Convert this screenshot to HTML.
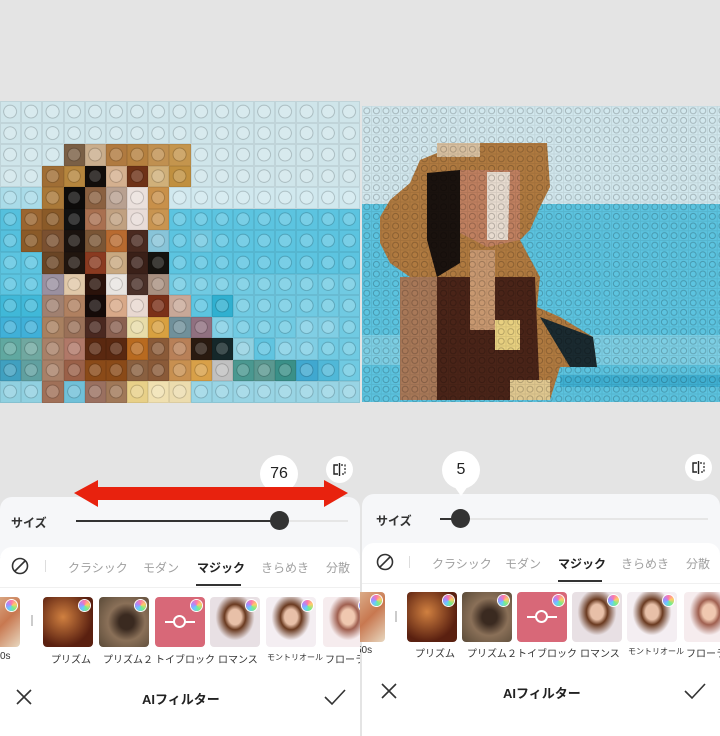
<!DOCTYPE html>
<html><head><meta charset="utf-8">
<style>
*{margin:0;padding:0;box-sizing:border-box}
body{width:720px;height:736px;overflow:hidden;background:#e4e4e4;font-family:"Liberation Sans","Noto Sans CJK JP",sans-serif;position:relative}
.abs{position:absolute}
.half{position:absolute;top:0;width:360px;height:736px;overflow:hidden}
.inner{position:absolute;top:0;width:720px;height:736px}
#lm{position:absolute;left:0;top:101px;width:360px;height:302px;display:grid;grid-template-columns:repeat(17,1fr);grid-template-rows:repeat(14,1fr)}
#lm div{box-shadow:inset 0 0 0 1px rgba(0,0,0,.07);background-image:radial-gradient(circle at 48% 48%,rgba(255,255,255,.18) 0 36%,rgba(0,0,0,.22) 40%,transparent 46%)}
.panel{background:#f6f7f9;border-radius:12px 12px 0 0}
.card{background:#fff;border-radius:12px 12px 0 0}
.lbl{font-size:12px;font-weight:bold;color:#333}
.tab{position:absolute;font-size:12px;color:#a0a0a0;white-space:nowrap}
.tab.on{color:#222;font-weight:bold}
.th{position:absolute;width:50px;height:50px;border-radius:4px;overflow:hidden}
.badge{position:absolute;right:3px;top:3px;width:11px;height:11px;border-radius:50%;background:conic-gradient(#f7a,#fc6,#7e8,#6cf,#a8f,#f7a);box-shadow:0 0 0 1px #fff}
.tl{position:absolute;font-size:10px;color:#333;white-space:nowrap}
.title{position:absolute;font-size:13px;font-weight:bold;color:#222}
.bub{position:absolute;width:38px;height:38px;border-radius:50%;background:#fff;font-size:16px;color:#222;text-align:center;line-height:38px}
.bub:after{content:"";position:absolute;left:12px;top:35px;border:7px solid transparent;border-top:10px solid #fff;border-bottom:0}
.cmp{position:absolute;width:27px;height:27px;border-radius:50%;background:#fff}
</style></head><body>

<div class="half" style="left:0"><div class="inner" style="left:0">
<div id="lm">
<div style="background-color:#cfe5ea"></div><div style="background-color:#cfe5ea"></div><div style="background-color:#cfe5ea"></div><div style="background-color:#cfe5ea"></div><div style="background-color:#cfe5ea"></div><div style="background-color:#cfe5ea"></div><div style="background-color:#cfe5ea"></div><div style="background-color:#cfe5ea"></div><div style="background-color:#cfe5ea"></div><div style="background-color:#cfe5ea"></div><div style="background-color:#cfe5ea"></div><div style="background-color:#cfe5ea"></div><div style="background-color:#cfe5ea"></div><div style="background-color:#cfe5ea"></div><div style="background-color:#cfe5ea"></div><div style="background-color:#cfe5ea"></div><div style="background-color:#cfe5ea"></div>
<div style="background-color:#cfe5ea"></div><div style="background-color:#cfe5ea"></div><div style="background-color:#cfe5ea"></div><div style="background-color:#cfe5ea"></div><div style="background-color:#cfe5ea"></div><div style="background-color:#cfe5ea"></div><div style="background-color:#cfe5ea"></div><div style="background-color:#cfe5ea"></div><div style="background-color:#cfe5ea"></div><div style="background-color:#cfe5ea"></div><div style="background-color:#cfe5ea"></div><div style="background-color:#cfe5ea"></div><div style="background-color:#cfe5ea"></div><div style="background-color:#cfe5ea"></div><div style="background-color:#cfe5ea"></div><div style="background-color:#cfe5ea"></div><div style="background-color:#cfe5ea"></div>
<div style="background-color:#cfe5ea"></div><div style="background-color:#cfe5ea"></div><div style="background-color:#cfe5ea"></div><div style="background-color:#7a5f45"></div><div style="background-color:#c9ad8c"></div><div style="background-color:#b07a40"></div><div style="background-color:#b5803f"></div><div style="background-color:#c09050"></div><div style="background-color:#c4954d"></div><div style="background-color:#cfe5ea"></div><div style="background-color:#cfe5ea"></div><div style="background-color:#cfe5ea"></div><div style="background-color:#cfe5ea"></div><div style="background-color:#cfe5ea"></div><div style="background-color:#cfe5ea"></div><div style="background-color:#cfe5ea"></div><div style="background-color:#cfe5ea"></div>
<div style="background-color:#cfe5ea"></div><div style="background-color:#cfe5ea"></div><div style="background-color:#a06e35"></div><div style="background-color:#b5853d"></div><div style="background-color:#120d0a"></div><div style="background-color:#d4b08f"></div><div style="background-color:#6e3217"></div><div style="background-color:#d0b07a"></div><div style="background-color:#c09040"></div><div style="background-color:#cfe5ea"></div><div style="background-color:#cfe5ea"></div><div style="background-color:#cfe5ea"></div><div style="background-color:#cfe5ea"></div><div style="background-color:#cfe5ea"></div><div style="background-color:#cfe5ea"></div><div style="background-color:#cfe5ea"></div><div style="background-color:#cfe5ea"></div>
<div style="background-color:#a9dbe8"></div><div style="background-color:#a9dbe8"></div><div style="background-color:#a97838"></div><div style="background-color:#0d0b0a"></div><div style="background-color:#8a6040"></div><div style="background-color:#b8a090"></div><div style="background-color:#eae0dc"></div><div style="background-color:#c8904a"></div><div style="background-color:#d0e8ee"></div><div style="background-color:#d0e8ee"></div><div style="background-color:#d0e8ee"></div><div style="background-color:#d0e8ee"></div><div style="background-color:#d0e8ee"></div><div style="background-color:#d0e8ee"></div><div style="background-color:#d0e8ee"></div><div style="background-color:#d0e8ee"></div><div style="background-color:#d0e8ee"></div>
<div style="background-color:#55c0dd"></div><div style="background-color:#9a6530"></div><div style="background-color:#8a5a28"></div><div style="background-color:#111"></div><div style="background-color:#a97050"></div><div style="background-color:#c0a080"></div><div style="background-color:#e8dcd8"></div><div style="background-color:#c89450"></div><div style="background-color:#5cc4e0"></div><div style="background-color:#5cc4e0"></div><div style="background-color:#5cc4e0"></div><div style="background-color:#5cc4e0"></div><div style="background-color:#5cc4e0"></div><div style="background-color:#5cc4e0"></div><div style="background-color:#5cc4e0"></div><div style="background-color:#5cc4e0"></div><div style="background-color:#5cc4e0"></div>
<div style="background-color:#55c0dd"></div><div style="background-color:#8a5a28"></div><div style="background-color:#7a5030"></div><div style="background-color:#1a120e"></div><div style="background-color:#7a5535"></div><div style="background-color:#b86a30"></div><div style="background-color:#4a2a20"></div><div style="background-color:#88c4d8"></div><div style="background-color:#5cc4e0"></div><div style="background-color:#70c8e0"></div><div style="background-color:#5cc4e0"></div><div style="background-color:#5cc4e0"></div><div style="background-color:#5cc4e0"></div><div style="background-color:#5cc4e0"></div><div style="background-color:#5cc4e0"></div><div style="background-color:#5cc4e0"></div><div style="background-color:#5cc4e0"></div>
<div style="background-color:#5cc4e0"></div><div style="background-color:#5cc4e0"></div><div style="background-color:#6a4525"></div><div style="background-color:#20150e"></div><div style="background-color:#8a3a20"></div><div style="background-color:#c8a880"></div><div style="background-color:#3a2018"></div><div style="background-color:#15120e"></div><div style="background-color:#5cc4e0"></div><div style="background-color:#5cc4e0"></div><div style="background-color:#5cc4e0"></div><div style="background-color:#5cc4e0"></div><div style="background-color:#5cc4e0"></div><div style="background-color:#5cc4e0"></div><div style="background-color:#5cc4e0"></div><div style="background-color:#5cc4e0"></div><div style="background-color:#5cc4e0"></div>
<div style="background-color:#5cc4e0"></div><div style="background-color:#5cc4e0"></div><div style="background-color:#9a90a0"></div><div style="background-color:#e0c8a8"></div><div style="background-color:#2a120a"></div><div style="background-color:#e8e4e0"></div><div style="background-color:#4a3028"></div><div style="background-color:#a89080"></div><div style="background-color:#70cae2"></div><div style="background-color:#70cae2"></div><div style="background-color:#70cae2"></div><div style="background-color:#70cae2"></div><div style="background-color:#70cae2"></div><div style="background-color:#70cae2"></div><div style="background-color:#70cae2"></div><div style="background-color:#70cae2"></div><div style="background-color:#70cae2"></div>
<div style="background-color:#40b8d8"></div><div style="background-color:#40b8d8"></div><div style="background-color:#a08070"></div><div style="background-color:#b08060"></div><div style="background-color:#150a08"></div><div style="background-color:#d8a888"></div><div style="background-color:#e8d8d0"></div><div style="background-color:#7a3018"></div><div style="background-color:#c8a898"></div><div style="background-color:#5cc4e0"></div><div style="background-color:#30b0d0"></div><div style="background-color:#70cae2"></div><div style="background-color:#70cae2"></div><div style="background-color:#70cae2"></div><div style="background-color:#70cae2"></div><div style="background-color:#70cae2"></div><div style="background-color:#70cae2"></div>
<div style="background-color:#40b0d8"></div><div style="background-color:#40b0d8"></div><div style="background-color:#a88060"></div><div style="background-color:#9a7058"></div><div style="background-color:#4a2820"></div><div style="background-color:#8a6050"></div><div style="background-color:#e8dca8"></div><div style="background-color:#d8a040"></div><div style="background-color:#70909a"></div><div style="background-color:#907080"></div><div style="background-color:#80cee4"></div><div style="background-color:#70cae2"></div><div style="background-color:#70cae2"></div><div style="background-color:#70cae2"></div><div style="background-color:#80cee4"></div><div style="background-color:#80cee4"></div><div style="background-color:#70cae2"></div>
<div style="background-color:#60a8a0"></div><div style="background-color:#70a8a0"></div><div style="background-color:#a88068"></div><div style="background-color:#b07868"></div><div style="background-color:#5a2810"></div><div style="background-color:#5a2810"></div><div style="background-color:#b86a20"></div><div style="background-color:#8a5a38"></div><div style="background-color:#b88058"></div><div style="background-color:#2a1a10"></div><div style="background-color:#15282a"></div><div style="background-color:#90d0e0"></div><div style="background-color:#60c4e0"></div><div style="background-color:#80cee4"></div><div style="background-color:#80cee4"></div><div style="background-color:#70cae2"></div><div style="background-color:#70cae2"></div>
<div style="background-color:#40a0c0"></div><div style="background-color:#60a0a0"></div><div style="background-color:#a88068"></div><div style="background-color:#9a6048"></div><div style="background-color:#8a4a18"></div><div style="background-color:#8a4a18"></div><div style="background-color:#8a6040"></div><div style="background-color:#8a5a38"></div><div style="background-color:#c89050"></div><div style="background-color:#d8a048"></div><div style="background-color:#c0c0c0"></div><div style="background-color:#4a9890"></div><div style="background-color:#5a9890"></div><div style="background-color:#3a9088"></div><div style="background-color:#40a8d0"></div><div style="background-color:#50b8d8"></div><div style="background-color:#70cae2"></div>
<div style="background-color:#90d0e0"></div><div style="background-color:#90d0e0"></div><div style="background-color:#a07058"></div><div style="background-color:#70c0d8"></div><div style="background-color:#9a7060"></div><div style="background-color:#a07858"></div><div style="background-color:#e8d088"></div><div style="background-color:#f0e0b0"></div><div style="background-color:#ecdcae"></div><div style="background-color:#98d4e4"></div><div style="background-color:#98d4e4"></div><div style="background-color:#98d4e4"></div><div style="background-color:#98d4e4"></div><div style="background-color:#98d4e4"></div><div style="background-color:#98d4e4"></div><div style="background-color:#98d4e4"></div><div style="background-color:#98d4e4"></div>
</div>

<div class="cmp" style="left:326px;top:456px"><svg width="27" height="27"><path d="M13.5 7v13M12 9h-4v9h4" stroke="#222" stroke-width="1.4" fill="none"/><path d="M15 9h4v9h-4" stroke="#222" stroke-width="1.2" fill="none" stroke-dasharray="2 1.5"/></svg></div>
<div class="panel abs" style="left:0;top:497px;width:360px;height:60px"></div>
<div class="bub" style="left:260px;top:455px">76</div>
<div class="lbl abs" style="left:11px;top:514px">サイズ</div>
<div class="abs" style="left:76px;top:520px;width:272px;height:2px;background:#e6e6e6"></div>
<div class="abs" style="left:76px;top:520px;width:204px;height:2px;background:#333"></div>
<div class="abs" style="left:270px;top:511px;width:19px;height:19px;border-radius:50%;background:#333"></div>
<svg class="abs" style="left:74px;top:480px" width="276" height="34"><polygon points="0,13 24,0 24,7 250,7 250,0 274,13 250,27 250,20 24,20 24,27" fill="#e8220e"/></svg>

<div class="card abs" style="left:0;top:547px;width:360px;height:189px"></div>
<svg class="abs" style="left:10px;top:556px" width="20" height="20"><circle cx="10" cy="10" r="7.5" stroke="#333" stroke-width="1.6" fill="none"/><line x1="5" y1="15" x2="15" y2="5" stroke="#333" stroke-width="1.6"/></svg>
<div class="abs" style="left:45px;top:560px;width:1px;height:12px;background:#ddd"></div>
<div class="tab" style="left:68px;top:559px">クラシック</div>
<div class="tab" style="left:143px;top:559px">モダン</div>
<div class="tab on" style="left:197px;top:559px">マジック</div>
<div class="tab" style="left:261px;top:559px">きらめき</div>
<div class="tab" style="left:326px;top:559px">分散</div>
<div class="abs" style="left:196px;top:584px;width:45px;height:2px;background:#333"></div>
<div class="abs" style="left:0;top:587px;width:360px;height:1px;background:#f0f0f0"></div>

<div class="th" style="left:-30px;top:597px;background:linear-gradient(135deg,#e8d0b0,#c87850 60%,#e8d8c0)"><div class="badge"></div></div>
<div class="abs" style="left:31px;top:615px;width:2px;height:11px;background:#ccc"></div>
<div class="th" style="left:43px;top:597px;background:radial-gradient(circle at 40% 40%,#d08040,#5a2010 70%)"><div class="badge"></div></div>
<div class="th" style="left:99px;top:597px;background:radial-gradient(circle at 55% 50%,#3a2a20 20%,#8a7058 50%,#5a4a38)"><div class="badge"></div></div>
<div class="th" style="left:155px;top:597px;background:#d86878"><div class="abs" style="left:10px;top:24px;width:30px;height:2px;background:#fff"></div><div class="abs" style="left:18px;top:18px;width:13px;height:13px;border-radius:50%;border:2px solid #fff;background:#d86878"></div><div class="badge"></div></div>
<div class="th" style="left:210px;top:597px;background:radial-gradient(ellipse at 50% 40%,#e8c0a8 18%,#6a3a20 30%,#e8e0e4 55%)"><div class="badge"></div></div>
<div class="th" style="left:266px;top:597px;background:radial-gradient(ellipse at 50% 40%,#e8c0a8 18%,#6a3a20 30%,#f4eef2 55%)"><div class="badge"></div></div>
<div class="th" style="left:323px;top:597px;background:radial-gradient(ellipse at 50% 40%,#f0c8b0 18%,#a06050 30%,#f6ecee 55%)"><div class="badge"></div></div>
<div class="tl" style="left:0;top:651px">0s</div>
<div class="tl" style="left:51px;top:651px">プリズム</div>
<div class="tl" style="left:103px;top:651px">プリズム２</div>
<div class="tl" style="left:155px;top:651px">トイブロック</div>
<div class="tl" style="left:218px;top:651px">ロマンス</div>
<div class="tl" style="left:267px;top:652px;font-size:8px">モントリオール</div>
<div class="tl" style="left:325px;top:651px">フローラ</div>

<svg class="abs" style="left:14px;top:687px" width="20" height="20"><path d="M3 3L17 17M17 3L3 17" stroke="#333" stroke-width="1.6"/></svg>
<div class="title" style="left:142px;top:689px">AIフィルター</div>
<svg class="abs" style="left:323px;top:687px" width="24" height="20"><path d="M2 10L9 17L22 3" stroke="#333" stroke-width="1.6" fill="none"/></svg>
</div></div>

<div class="half" style="left:360px"><div class="inner" style="left:-360px">
<svg class="abs" style="left:362px;top:106px" width="358" height="296" viewBox="362 106 358 296">
<defs>
<pattern id="st" x="362" y="106" width="9.6" height="9.6" patternUnits="userSpaceOnUse">
<rect width="9.6" height="9.6" fill="none" stroke="rgba(0,0,0,.08)" stroke-width="1"/>
<circle cx="4.8" cy="4.8" r="3" fill="none" stroke="rgba(0,0,0,.22)" stroke-width="1"/>
</pattern>
</defs>
<rect x="362" y="106" width="358" height="98" fill="#d2e8ee"/>
<rect x="362" y="204" width="358" height="200" fill="#5cc4e0"/>
<rect x="362" y="335" width="358" height="30" fill="#7dcfe4"/>
<rect x="560" y="375" width="160" height="12" fill="#3fb0d2"/>
<polygon fill="#b07a40" points="437,143 547,143 550,187 540,207 530,230 520,240 540,277 537,307 560,317 593,337 597,367 560,367 550,400 400,400 400,350 410,277 390,263 380,243 380,217 390,200 410,183 420,160 437,153"/>
<polygon fill="#d8c0a0" points="437,143 480,143 480,157 437,157"/>
<polygon fill="#1a120e" points="427,173 460,170 460,263 437,277 427,240"/>
<polygon fill="#c08060" points="460,170 520,170 520,240 487,247 460,233"/>
<polygon fill="#e8dcd0" points="487,172 510,172 508,240 487,240"/>
<polygon fill="#4a2418" points="437,277 535,277 540,400 437,400"/>
<polygon fill="#c89870" points="470,250 495,250 495,330 470,330"/>
<polygon fill="#a87858" points="400,277 437,277 437,400 400,400"/>
<polygon fill="#e8d080" points="495,320 520,320 520,350 495,350"/>
<polygon fill="#1a2a30" points="540,317 593,337 597,367 570,367"/>
<polygon fill="#e0c890" points="510,380 550,380 550,400 510,400"/>
<rect x="362" y="106" width="358" height="296" fill="url(#st)"/>
</svg>

<div class="cmp" style="left:685px;top:454px"><svg width="27" height="27"><path d="M13.5 7v13M12 9h-4v9h4" stroke="#222" stroke-width="1.4" fill="none"/><path d="M15 9h4v9h-4" stroke="#222" stroke-width="1.2" fill="none" stroke-dasharray="2 1.5"/></svg></div>
<div class="panel abs" style="left:362px;top:494px;width:358px;height:60px"></div>
<div class="bub" style="left:442px;top:451px">5</div>
<div class="lbl abs" style="left:376px;top:512px">サイズ</div>
<div class="abs" style="left:440px;top:518px;width:268px;height:2px;background:#e6e6e6"></div>
<div class="abs" style="left:440px;top:518px;width:21px;height:2px;background:#333"></div>
<div class="abs" style="left:451px;top:509px;width:19px;height:19px;border-radius:50%;background:#333"></div>

<div class="card abs" style="left:362px;top:543px;width:358px;height:193px"></div>
<svg class="abs" style="left:375px;top:552px" width="20" height="20"><circle cx="10" cy="10" r="7.5" stroke="#333" stroke-width="1.6" fill="none"/><line x1="5" y1="15" x2="15" y2="5" stroke="#333" stroke-width="1.6"/></svg>
<div class="abs" style="left:409px;top:556px;width:1px;height:12px;background:#ddd"></div>
<div class="tab" style="left:432px;top:555px">クラシック</div>
<div class="tab" style="left:505px;top:555px">モダン</div>
<div class="tab on" style="left:558px;top:555px">マジック</div>
<div class="tab" style="left:621px;top:555px">きらめき</div>
<div class="tab" style="left:686px;top:555px">分散</div>
<div class="abs" style="left:558px;top:580px;width:44px;height:2px;background:#333"></div>
<div class="abs" style="left:362px;top:583px;width:358px;height:1px;background:#f0f0f0"></div>

<div class="th" style="left:335px;top:592px;background:linear-gradient(135deg,#e8d0b0,#c87850 60%,#e8d8c0)"><div class="badge"></div></div>
<div class="abs" style="left:395px;top:611px;width:2px;height:11px;background:#ccc"></div>
<div class="th" style="left:407px;top:592px;background:radial-gradient(circle at 40% 40%,#d08040,#5a2010 70%)"><div class="badge"></div></div>
<div class="th" style="left:462px;top:592px;background:radial-gradient(circle at 55% 50%,#3a2a20 20%,#8a7058 50%,#5a4a38)"><div class="badge"></div></div>
<div class="th" style="left:517px;top:592px;background:#d86878"><div class="abs" style="left:10px;top:24px;width:30px;height:2px;background:#fff"></div><div class="abs" style="left:18px;top:18px;width:13px;height:13px;border-radius:50%;border:2px solid #fff;background:#d86878"></div><div class="badge"></div></div>
<div class="th" style="left:572px;top:592px;background:radial-gradient(ellipse at 50% 40%,#e8c0a8 18%,#6a3a20 30%,#e8e0e4 55%)"><div class="badge"></div></div>
<div class="th" style="left:627px;top:592px;background:radial-gradient(ellipse at 50% 40%,#e8c0a8 18%,#6a3a20 30%,#f4eef2 55%)"><div class="badge"></div></div>
<div class="th" style="left:684px;top:592px;background:radial-gradient(ellipse at 50% 40%,#f0c8b0 18%,#a06050 30%,#f6ecee 55%)"></div>
<div class="tl" style="left:356px;top:645px">50s</div>
<div class="tl" style="left:415px;top:645px">プリズム</div>
<div class="tl" style="left:467px;top:645px">プリズム２</div>
<div class="tl" style="left:517px;top:645px">トイブロック</div>
<div class="tl" style="left:580px;top:645px">ロマンス</div>
<div class="tl" style="left:628px;top:646px;font-size:8px">モントリオール</div>
<div class="tl" style="left:686px;top:645px">フローラ</div>

<svg class="abs" style="left:379px;top:681px" width="20" height="20"><path d="M3 3L17 17M17 3L3 17" stroke="#333" stroke-width="1.6"/></svg>
<div class="title" style="left:503px;top:683px">AIフィルター</div>
<svg class="abs" style="left:683px;top:681px" width="24" height="20"><path d="M2 10L9 17L22 3" stroke="#333" stroke-width="1.6" fill="none"/></svg>
</div></div>
</body></html>
